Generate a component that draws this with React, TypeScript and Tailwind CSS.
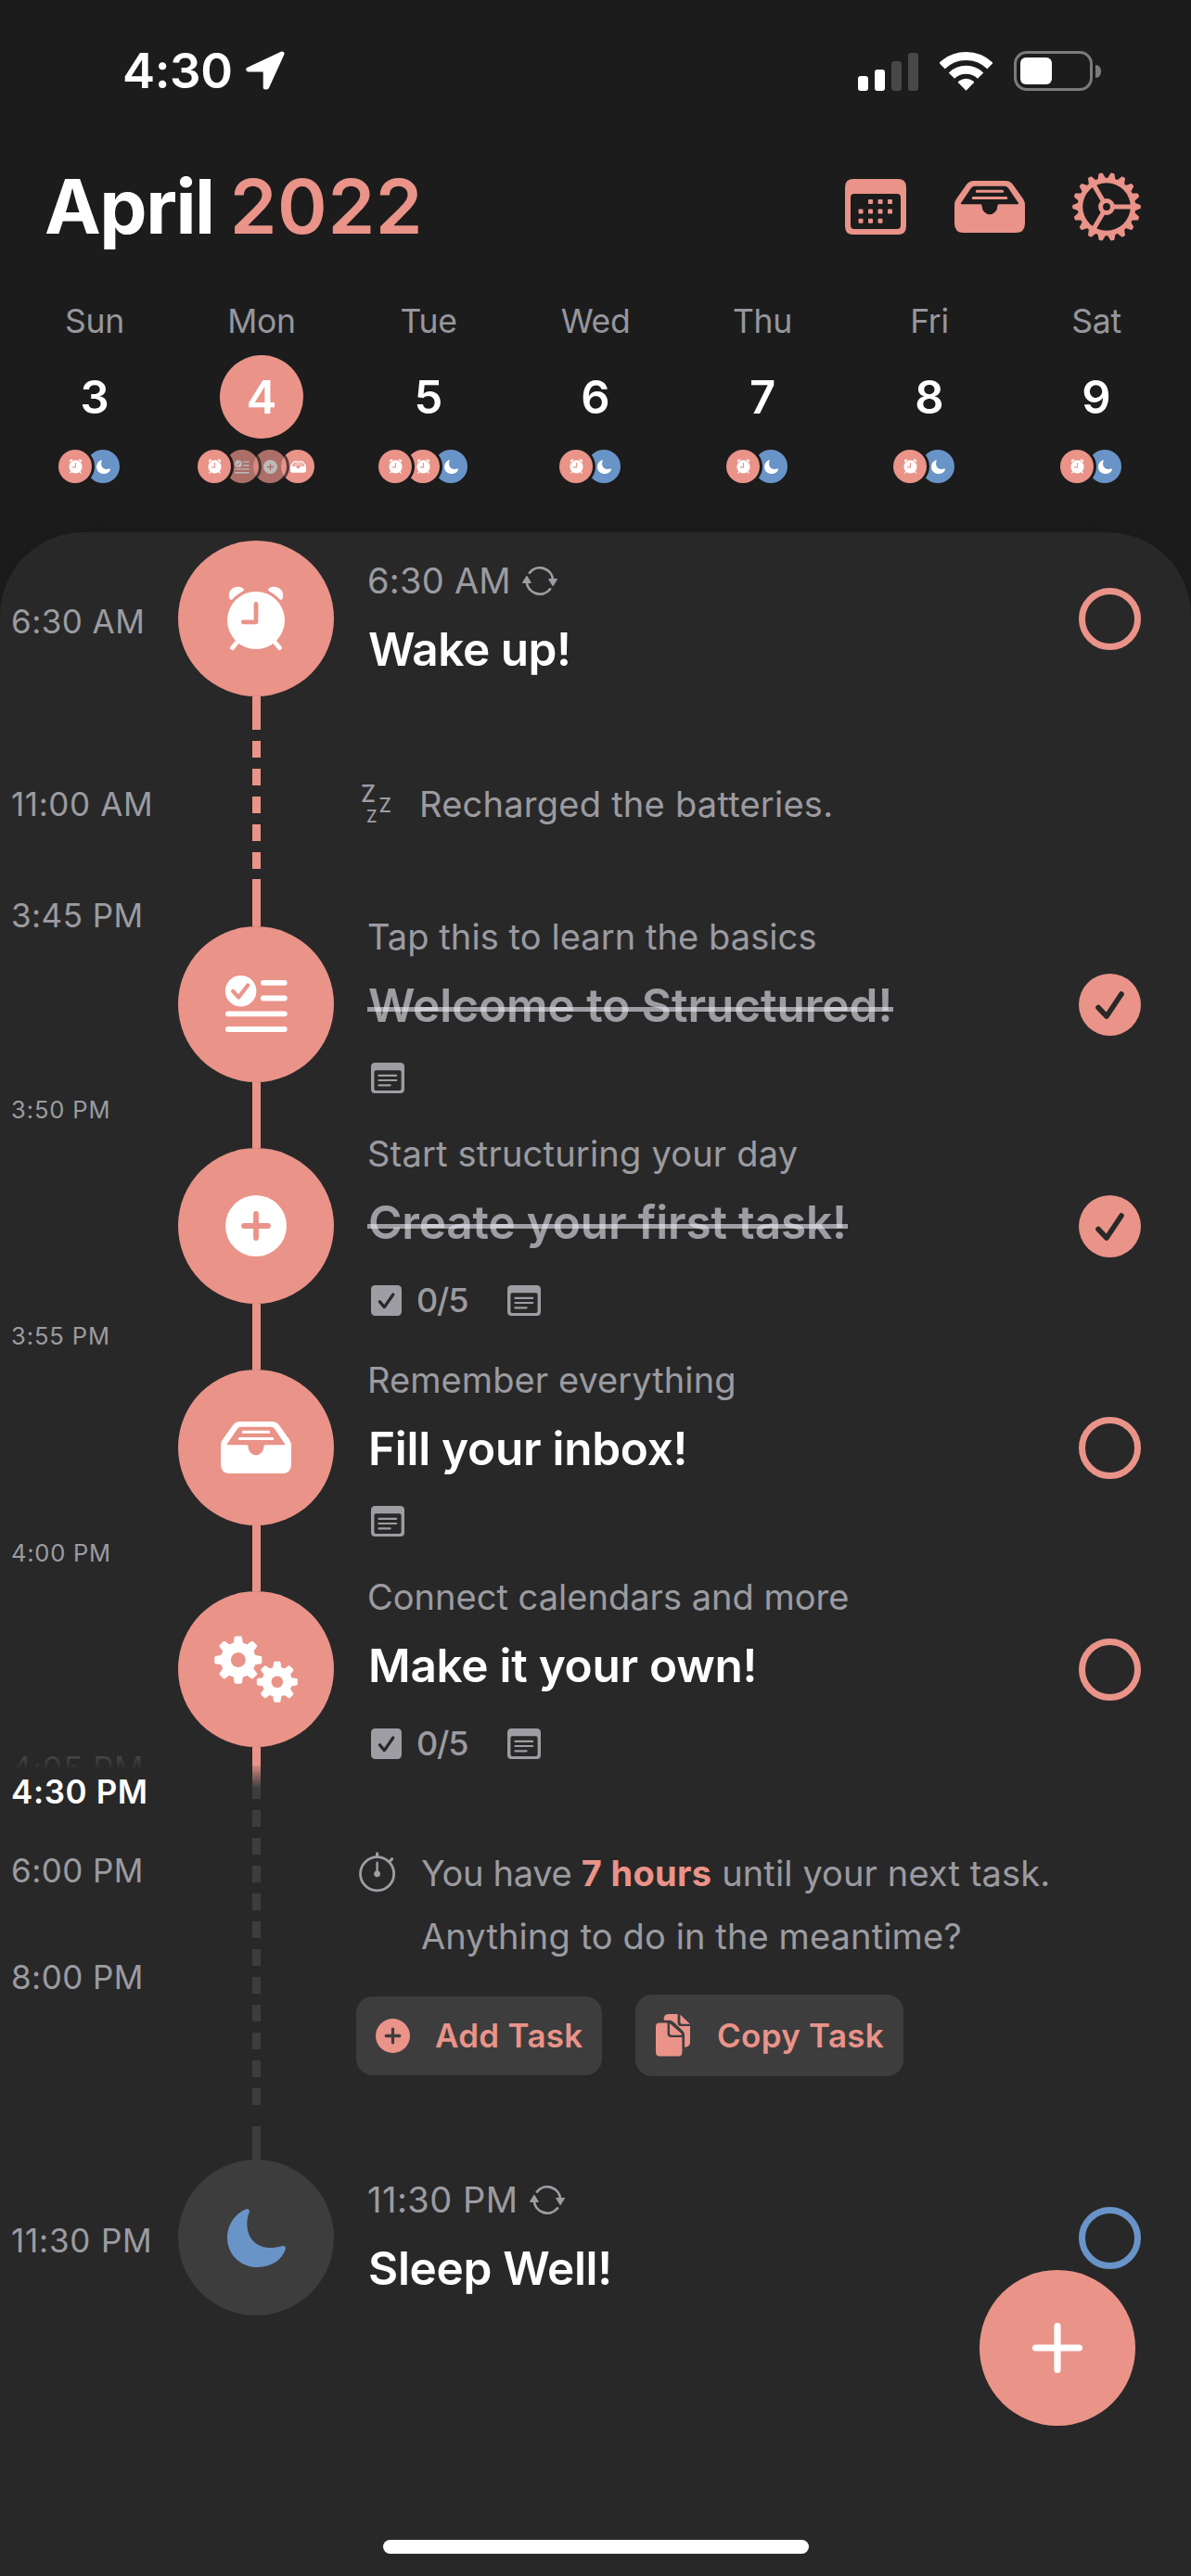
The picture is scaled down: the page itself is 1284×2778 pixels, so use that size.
import type { ReactNode } from "react";

/* ---------- icons ---------- */

type IconProps = { className?: string };

function gearPath(cx: number, cy: number, teeth: number, outer: number, root: number, tip: number, base: number) {
  const step = (Math.PI * 2) / teeth;
  const at = (r: number, a: number) => `${(cx + r * Math.cos(a)).toFixed(2)} ${(cy + r * Math.sin(a)).toFixed(2)}`;
  let d = "";
  for (let i = 0; i < teeth; i++) {
    const a = i * step;
    d += `${i === 0 ? "M" : "L"}${at(root, a - step * base)} L${at(outer, a - step * tip)} L${at(outer, a + step * tip)} L${at(root, a + step * base)} `;
  }
  return d + "Z";
}

const LocationArrow = ({ className }: IconProps) => (
  <svg viewBox="0 0 42 42" className={className}>
    <path d="M39 3 L2.8 20 H21.2 V39 H22.6 Z" fill="white" stroke="white" strokeWidth="5" strokeLinejoin="round" />
  </svg>
);

const Wifi = ({ className }: IconProps) => (
  <svg viewBox="0 0 57 42" className={className}>
    <g fill="none" stroke="white" strokeWidth="9">
      <path d="M2.6 15.1 A37 37 0 0 1 54.4 15.1" />
      <path d="M12.9 25.6 A22.3 22.3 0 0 1 44.1 25.6" />
    </g>
    <path d="M28.5 41.8 L20.2 33.2 Q19.6 32.2 20.6 31.4 Q28.5 26.2 36.4 31.4 Q37.4 32.2 36.8 33.2 Z" fill="white" />
  </svg>
);

const CalendarIcon = ({ className }: IconProps) => (
  <svg viewBox="0 0 66 60" className={className} fill="currentColor">
    <path fillRule="evenodd" d="M9 0 H57 Q66 0 66 9 V51 Q66 60 57 60 H9 Q0 60 0 51 V9 Q0 0 9 0 Z M10 16 Q6 16 6 20 V50 Q6 54 10 54 H56 Q60 54 60 50 V20 Q60 16 56 16 Z" />
    {[[25, 22], [35.5, 22], [46, 22], [14.5, 32.4], [25, 32.4], [35.5, 32.4], [46, 32.4], [14.5, 42.8], [25, 42.8], [35.5, 42.8]].map(([x, y]) => (
      <rect key={`${x}-${y}`} x={x} y={y} width="5" height="5" rx="1" />
    ))}
  </svg>
);

const InboxIcon = ({ className }: IconProps) => (
  <svg viewBox="0 0 76 56" className={className} fill="currentColor">
    <path
      fillRule="evenodd"
      d="M0 26 Q0 22.5 2 19.5 L13 4 Q16 0 21 0 H55 Q60 0 63 4 L74 19.5 Q76 22.5 76 26 V46 Q76 56 66 56 H10 Q0 56 0 46 Z M7 24 Q6.4 25.2 8 25.2 H28 Q29.6 25.2 29.6 27 A8.4 9.2 0 0 0 46.4 27 Q46.4 25.2 48 25.2 H68 Q69.6 25.2 69 24 L58.2 8 Q56.5 5.7 54 5.7 H22 Q19.5 5.7 17.8 8 Z"
    />
    <path d="M24.3 11.2 H51.7 M20.2 18.4 H55.8" stroke="currentColor" strokeWidth="3" strokeLinecap="round" />
  </svg>
);

const SettingsGear = ({ className }: IconProps) => (
  <svg viewBox="0 0 74 74" className={className}>
    <path d={gearPath(37, 37, 18, 36, 30.5, 0.11, 0.34)} fill="currentColor" stroke="currentColor" strokeWidth="1.6" strokeLinejoin="round" />
    <circle cx="37" cy="37" r="25.8" fill="#1c1c1c" />
    <path d="M44 37 H64 M33.5 31 L23.3 13.4 M33.5 43 L23.3 60.6" stroke="currentColor" strokeWidth="5" />
    <circle cx="37" cy="37" r="6.4" fill="#1c1c1c" stroke="currentColor" strokeWidth="5" />
  </svg>
);

const AlarmIcon = ({ className }: IconProps) => (
  <svg viewBox="0 0 64 70" className={className}>
    <g fill="white">
      <circle cx="32" cy="37" r="31" />
      <path d="M3.3 13 C1 6 6.5 .7 12.5 .7 C15.5 .7 17.6 1.7 18.8 3.2 Q19.6 4.6 18 5.6 C13.4 8 9.8 10.8 6.6 14.2 Q4.4 16 3.3 13 Z" />
      <path d="M60.7 13 C63 6 57.5 .7 51.5 .7 C48.5 .7 46.4 1.7 45.2 3.2 Q44.4 4.6 46 5.6 C50.6 8 54.2 10.8 57.4 14.2 Q59.6 16 60.7 13 Z" />
    </g>
    <path d="M12.5 59.5 L6.6 66.6 M51.5 59.5 L57.4 66.6" stroke="white" strokeWidth="4.8" strokeLinecap="round" />
    <path d="M32 19.3 V38.8 H18.3" fill="none" stroke="#ea9389" strokeWidth="4.8" strokeLinecap="round" strokeLinejoin="round" />
  </svg>
);

const ChecklistIcon = ({ className }: IconProps) => (
  <svg viewBox="0 0 69 64" className={className}>
    <circle cx="17.6" cy="17.7" r="16.8" fill="white" />
    <path d="M9.2 18 L15.2 24.6 L25.2 11.4" fill="none" stroke="#ea9389" strokeWidth="4.2" strokeLinecap="round" strokeLinejoin="round" />
    <path d="M41.8 8.8 H64.8 M41.8 25.5 H64.8 M3.8 42.3 H64.8 M3.8 59 H64.8" stroke="white" strokeWidth="5.8" strokeLinecap="round" />
  </svg>
);

const PlusCircle = ({ className, plus = "#ea9389", fill = "white" }: IconProps & { plus?: string; fill?: string }) => (
  <svg viewBox="0 0 66 66" className={className}>
    <circle cx="33" cy="33" r="33" fill={fill} />
    <path d="M33 20 V46 M20 33 H46" stroke={plus} strokeWidth="5.8" strokeLinecap="round" />
  </svg>
);

const GearsIcon = ({ className }: IconProps) => (
  <svg viewBox="0 0 90 88" className={className}>
    <g fill="white" stroke="white" strokeWidth="3" strokeLinejoin="round">
      <path d={gearPath(25.8, 26.1, 8, 24.2, 17.8, 0.14, 0.27)} />
      <path d={gearPath(67.8, 49.8, 8, 20.6, 15, 0.14, 0.27)} />
    </g>
    <circle cx="25.8" cy="26.1" r="8" fill="#ea9389" />
    <circle cx="67.8" cy="49.8" r="6.3" fill="#ea9389" />
  </svg>
);

const MoonIcon = ({ className }: IconProps) => (
  <svg viewBox="0 0 63 63" className={className} fill="currentColor">
    <path d="M20 .6 C22.8 -.6 24.6 1 23.8 3.8 C21.4 9.5 21 15 21.6 20 C23 33.5 32.5 42 46.5 42 C51 42 54.4 41.4 58.6 40.2 C61.6 39.2 63.4 40.6 62.8 43.6 C59 55.4 47.4 63 33 63 C14.5 63 0 49.5 0 31 C0 17.4 8.2 5.6 20 .6 Z" />
  </svg>
);

const RepeatIcon = ({ className }: IconProps) => (
  <svg viewBox="0 0 38 31" className={className}>
    <g fill="none" stroke="#9d9da3" strokeWidth="2.8" strokeLinecap="round">
      <path d="M8 6.6 A14.2 14.2 0 0 1 33.2 15" />
      <path d="M30 24.4 A14.2 14.2 0 0 1 4.8 16" />
    </g>
    <path d="M.8 17.4 L4.9 10.6 L9 17.4 Z M29 13.6 L33.1 20.4 L37.2 13.6 Z" fill="#9d9da3" stroke="#9d9da3" strokeWidth="1.4" strokeLinejoin="round" />
  </svg>
);

const NoteIcon = ({ className }: IconProps) => (
  <svg viewBox="0 0 36 33" className={className}>
    <path fillRule="evenodd" fill="#9d9da3" d="M4.5 0 H31.5 Q36 0 36 4.5 V28.5 Q36 33 31.5 33 H4.5 Q0 33 0 28.5 V4.5 Q0 0 4.5 0 Z M5.4 8.3 Q3.4 8.3 3.4 10.3 V28 Q3.4 30 5.4 30 H30.6 Q32.6 30 32.6 28 V10.3 Q32.6 8.3 30.6 8.3 Z" />
    <path d="M8.4 13.8 H27.2 M8.4 19 H27.2 M8.4 24.3 H20.6" stroke="#9d9da3" strokeWidth="2.2" strokeLinecap="round" />
  </svg>
);

const CheckBoxIcon = ({ className }: IconProps) => (
  <svg viewBox="0 0 33 33" className={className}>
    <rect width="33" height="33" rx="4.5" fill="#9d9da3" />
    <path d="M9.3 17.6 L14.4 23.6 L23.8 10" fill="none" stroke="#282828" strokeWidth="3.2" strokeLinecap="round" strokeLinejoin="round" />
  </svg>
);

const SleepIcon = ({ className }: IconProps) => (
  <svg viewBox="-4 -9 42 60" className={className} fill="#9d9da3" fontFamily="Inter, sans-serif" fontWeight="500">
    <text x="-1" y="19.4" fontSize="25">Z</text>
    <text x="18.4" y="30" fontSize="21">Z</text>
    <text x="5" y="41" fontSize="18">Z</text>
  </svg>
);

const StopwatchIcon = ({ className }: IconProps) => (
  <svg viewBox="0 0 40 44" className={className}>
    <g fill="none" stroke="#9d9da3" strokeLinecap="round">
      <circle cx="19.6" cy="23.7" r="18.1" strokeWidth="2.8" />
      <path d="M19.6 1.8 V5" strokeWidth="3.2" />
      <path d="M33.2 10.2 L35.6 7.8" strokeWidth="3.2" />
      <path d="M19.6 11.8 V22" strokeWidth="2.4" />
    </g>
    <circle cx="19.6" cy="23.8" r="3.4" fill="#9d9da3" />
  </svg>
);

const CopyIcon = ({ className }: IconProps) => (
  <svg viewBox="0 0 37 46" className={className} fill="#ea9389">
    <path d="M8.6 5.5 Q8.6 0 14 0 H23.6 V9.5 Q23.6 13 27 13 H37 V30.5 Q37 34.6 33 35.4 L20 36 Z" />
    <path d="M26.4 .8 L37 10.8 H28.4 Q26.4 10.8 26.4 8.8 Z" />
    <path d="M-2 6.8 H15 Q17 6.8 19 8.6 L28.6 17.4 Q31 19.6 31 22.5 V46 H-2 Z" fill="#3d3d3d" />
    <path d="M0 13.6 Q0 9.4 4 9.4 H12.6 V21 Q12.6 25 16.6 25 H28.4 V41 Q28.4 45.6 24 45.6 H4.4 Q0 45.6 0 41 Z" />
    <path d="M15 10 L27.8 21.2 Q28.6 22.6 27 22.8 H17 Q15 22.8 15 20.6 Z" />
  </svg>
);

/* ---------- header ---------- */

function StatusBar() {
  return (
    <div className="flex h-[153px] items-center justify-between pl-[132px] pr-[97px]">
      <div className="flex items-center">
        <span className="w-[133px] text-[52.7px] font-semibold leading-none tracking-[-0.4px]">4:30</span>
        <LocationArrow className="size-[42px]" />
      </div>
      <div className="flex h-[43px] items-center">
        <div className="flex h-[41px] items-end gap-[7px] self-end">
          <div className="h-4 w-[11px] rounded-[3px] bg-white" />
          <div className="h-[23px] w-[11px] rounded-[3px] bg-white" />
          <div className="h-8 w-[11px] rounded-[3px] bg-[#48484a]" />
          <div className="h-[41px] w-[11px] rounded-[3px] bg-[#48484a]" />
        </div>
        <Wifi className="ml-[23px] h-[42px] w-[57px]" />
        <div className="ml-[23px] flex h-[43px] w-[85px] items-center rounded-[14px] border-[3px] border-[#7b7b7c] pl-[4px]">
          <div className="h-[29px] w-[34px] rounded-[6px] bg-white" />
        </div>
        <div className="ml-[3px] h-[14px] w-[6px] rounded-r-full bg-[#7b7b7c]" />
      </div>
    </div>
  );
}

function TitleBar() {
  return (
    <div className="flex h-[139px] items-center justify-between pl-12 pr-[54px]">
      <h1 className="flex text-[81.5px] leading-none">
        <span className="font-bold tracking-[-1.5px]">April</span>
        <span className="ml-[17px] font-[560] tracking-[0.6px] text-[#ea9389]">2022</span>
      </h1>
      <div className="flex items-center text-[#ea9389]">
        <CalendarIcon className="mr-[52px] h-[60px] w-[66px]" />
        <InboxIcon className="mr-[51px] h-[56px] w-[76px]" />
        <SettingsGear className="size-[74px]" />
      </div>
    </div>
  );
}

type MiniKind = "alarm" | "moon" | "list" | "plus" | "inbox";
type Mini = { kind: MiniKind; dim?: boolean };

const miniIcons: Record<MiniKind, ReactNode> = {
  alarm: <AlarmIcon className="h-4 w-[15px]" />,
  moon: <MoonIcon className="size-[15px]" />,
  list: <ChecklistIcon className="h-[15px] w-4" />,
  plus: <PlusCircle className="size-[15px]" />,
  inbox: <InboxIcon className="h-[13px] w-[17px]" />,
};

const miniLayers = ["z-40", "z-30", "z-20", "z-10"];

const usual: Mini[] = [{ kind: "alarm" }, { kind: "moon" }];

const days: { name: string; date: number; minis: Mini[]; selected?: boolean }[] = [
  { name: "Sun", date: 3, minis: usual },
  {
    name: "Mon",
    date: 4,
    selected: true,
    minis: [{ kind: "alarm" }, { kind: "list", dim: true }, { kind: "plus", dim: true }, { kind: "inbox" }],
  },
  { name: "Tue", date: 5, minis: [{ kind: "alarm" }, { kind: "alarm" }, { kind: "moon" }] },
  { name: "Wed", date: 6, minis: usual },
  { name: "Thu", date: 7, minis: usual },
  { name: "Fri", date: 8, minis: usual },
  { name: "Sat", date: 9, minis: usual },
];

function WeekStrip() {
  return (
    <div className="grid h-[282px] grid-cols-7 px-3 pt-[34px]">
      {days.map((day) => (
        <div key={day.name} className="flex flex-col items-center">
          <div className="h-[41px] text-[35.5px] leading-[41px] tracking-[-0.3px] text-[#ebebf5]/60">{day.name}</div>
          <div
            className={`mt-4 flex size-[90px] items-center justify-center rounded-full text-[49px] font-semibold leading-none ${
              day.selected ? "bg-[#ea9389]" : ""
            }`}
          >
            {day.date}
          </div>
          <div className="isolate mr-3 mt-3 flex -space-x-1.5">
            {day.minis.map((m, i) => (
              <div
                key={i}
                className={`relative flex size-9 items-center justify-center rounded-full text-white ring-[3px] ring-[#1c1c1c] ${miniLayers[i]} ${
                  m.kind === "moon" ? "bg-[#6994c8]" : "bg-[#ea9389]"
                } ${m.dim ? "opacity-70" : ""}`}
              >
                {miniIcons[m.kind]}
              </div>
            ))}
          </div>
        </div>
      ))}
    </div>
  );
}

/* ---------- timeline ---------- */

const timeLabels: { text: string; className: string }[] = [
  { text: "6:30 AM", className: "mt-[76px] h-10 text-[35px] leading-10 tracking-[0.45px] text-[#ebebf5]/60" },
  { text: "11:00 AM", className: "mt-[157px] h-10 text-[35px] leading-10 tracking-[0.6px] text-[#ebebf5]/60" },
  { text: "3:45 PM", className: "mt-[80px] h-10 text-[35px] leading-10 tracking-[0.45px] text-[#ebebf5]/60" },
  { text: "3:50 PM", className: "mt-[175px] h-[30px] text-[25.5px] leading-[30px] tracking-[0.9px] text-[#ebebf5]/60" },
  { text: "3:55 PM", className: "mt-[214px] h-[30px] text-[25.5px] leading-[30px] tracking-[0.9px] text-[#ebebf5]/60" },
  { text: "4:00 PM", className: "mt-[204px] h-[30px] text-[25.5px] leading-[30px] tracking-[0.75px] text-[#ebebf5]/60" },
  {
    text: "4:05 PM",
    className:
      "mt-[197px] h-[25px] overflow-hidden text-[35px] leading-10 tracking-[0.45px] text-[#ebebf5]/15 [mask-image:linear-gradient(to_bottom,black_30%,transparent_88%)]",
  },
  { text: "4:30 PM", className: "h-10 text-[35px] font-semibold leading-10 tracking-[0.6px] text-white" },
  { text: "6:00 PM", className: "mt-[45px] h-10 text-[35px] leading-10 tracking-[0.45px] text-[#ebebf5]/60" },
  { text: "8:00 PM", className: "mt-[75px] h-10 text-[35px] leading-10 tracking-[0.45px] text-[#ebebf5]/60" },
  { text: "11:30 PM", className: "mt-[244px] h-10 text-[35px] leading-10 tracking-[0.8px] text-[#ebebf5]/60" },
];

function Node({ children, muted }: { children: ReactNode; muted?: boolean }) {
  return (
    <div className={`flex size-[168px] items-center justify-center rounded-full ${muted ? "bg-[#3d3d3d]" : "bg-[#ea9389]"}`}>
      {children}
    </div>
  );
}

function Rail() {
  return (
    <div className="flex w-[168px] flex-col items-center pt-[9px] text-white">
      <Node>
        <AlarmIcon className="h-[70px] w-16" />
      </Node>
      <div className="h-9 w-[9px] bg-[#ea9389]" />
      <div className="h-[161px] w-[9px] bg-[repeating-linear-gradient(to_bottom,transparent_0_12px,#ea9389_12px_30px)]" />
      <div className="h-[51px] w-[9px] bg-[#ea9389]" />
      <Node>
        <ChecklistIcon className="h-16 w-[69px]" />
      </Node>
      <div className="h-[71px] w-[9px] bg-[#ea9389]" />
      <Node>
        <PlusCircle className="size-[66px]" />
      </Node>
      <div className="h-[71px] w-[9px] bg-[#ea9389]" />
      <Node>
        <InboxIcon className="h-[56px] w-[76px]" />
      </Node>
      <div className="h-[71px] w-[9px] bg-[#ea9389]" />
      <Node>
        <GearsIcon className="mt-[16px] h-[88px] w-[90px]" />
      </Node>
      <div className="h-5 w-[9px] bg-[#ea9389]" />
      <div className="h-6 w-[9px] bg-linear-to-b from-[#d48980] to-[#3d3d3d]" />
      <div className="h-3 w-[9px] bg-[#3d3d3d]" />
      <div className="h-[330px] w-[9px] bg-[repeating-linear-gradient(to_bottom,transparent_0_12px,#3d3d3d_12px_30px)]" />
      <div className="mt-[23px] h-9 w-[9px] bg-[#3d3d3d]" />
      <Node muted>
        <MoonIcon className="size-[63px] text-[#6994c8]" />
      </Node>
    </div>
  );
}

type TaskProps = {
  sub: string;
  title: string;
  className: string;
  checkClass: string;
  titleClass?: string;
  subClass?: string;
  repeat?: boolean;
  done?: boolean;
  blue?: boolean;
  metaClass?: string;
  counter?: string;
};

function Task({ sub, title, className, checkClass, titleClass = "tracking-[-0.27px]", subClass = "tracking-[0.08px]", repeat, done, blue, metaClass, counter }: TaskProps) {
  return (
    <div className={`flex items-start justify-between ${className}`}>
      <div>
        <div className={`flex h-[60px] items-center text-[38px] leading-[60px] text-[#ebebf5]/60 ${subClass}`}>
          {sub}
          {repeat && <RepeatIcon className="ml-[12px] h-[31px] w-[38px]" />}
        </div>
        <div className="flex h-[88px]">
          <span className={`relative pl-px text-[49.5px] font-semibold leading-[88px] ${done ? "text-[#ebebf5]/60" : "text-white"} ${titleClass}`}>
            {title}
            {done && <span className="absolute -right-px left-0 top-[46px] h-[5px] bg-[#ebebf5]/60" />}
          </span>
        </div>
        {metaClass && (
          <div className={`ml-1 flex h-10 items-center ${metaClass}`}>
            {counter && (
              <>
                <CheckBoxIcon className="size-[33px]" />
                <span className="ml-[16px] w-[98px] text-[36px] font-medium leading-10 tracking-[-1.2px] text-[#ebebf5]/60">{counter}</span>
              </>
            )}
            <NoteIcon className="h-[33px] w-9" />
          </div>
        )}
      </div>
      {done ? (
        <div className={`flex size-[67px] items-center justify-center rounded-full bg-[#ea9389] ${checkClass}`}>
          <svg viewBox="0 0 67 67" className="size-[67px]">
            <path d="M21 36.5 L30 46 L46 22" fill="none" stroke="#282828" strokeWidth="5.6" strokeLinecap="round" strokeLinejoin="round" />
          </svg>
        </div>
      ) : (
        <div className={`size-[67px] rounded-full border-[7px] ${blue ? "border-[#6994c8]" : "border-[#ea9389]"} ${checkClass}`} />
      )}
    </div>
  );
}

function Content() {
  return (
    <div className="flex-1 pl-9 pr-[54px] pt-[22px]">
      <Task className="h-[148px]" sub="6:30 AM" title="Wake up!" titleClass="tracking-[-0.45px]" subClass="tracking-[0.25px]" checkClass="mt-[38px]" repeat />

      <div className="ml-[-10px] mt-[93px] flex h-[60px] items-center">
        <SleepIcon className="h-[60px] w-[42px]" />
        <span className="ml-[24px] text-[38px] leading-[60px] tracking-[0.25px] text-[#ebebf5]/60">Recharged the batteries.</span>
      </div>

      <Task className="mt-[83px] h-[202px]" sub="Tap this to learn the basics" title="Welcome to Structured!" titleClass="tracking-[-0.03px]" checkClass="mt-[70px]" metaClass="mt-[14px]" done />
      <Task className="mt-8 h-[208px]" sub="Start structuring your day" title="Create your first task!" titleClass="tracking-[-0.16px]" subClass="tracking-[0.2px]" checkClass="mt-[75px]" metaClass="mt-5" counter="0/5" done />
      <Task className="mt-9 h-[202px]" sub="Remember everything" title="Fill your inbox!" checkClass="mt-[70px]" metaClass="mt-[14px]" />
      <Task className="mt-8 h-[208px]" sub="Connect calendars and more" title="Make it your own!" subClass="tracking-[0.02px]" checkClass="mt-[75px]" metaClass="mt-5" counter="0/5" />

      <div className="ml-[-9px] mt-[86px] flex h-[136px] items-start">
        <StopwatchIcon className="mt-[11px] h-11 w-10" />
        <p className="ml-[27px] whitespace-nowrap text-[38px] leading-[68px] tracking-[0.12px] text-[#ebebf5]/60">
          <span className="tracking-[-0.3px]">You have </span>
          <span className="font-bold tracking-[0.3px] text-[#ea9389]">7 hours</span> until your next task.
          <br />
          Anything to do in the meantime?
        </p>
      </div>

      <div className="ml-[-12px] mt-[29px] flex h-[88px] items-center gap-9 text-[35px] font-semibold tracking-[0.28px] text-[#ea9389]">
        <button className="flex h-[85px] w-[265px] items-center rounded-[18px] bg-[#3d3d3d] pl-[21px]">
          <PlusCircle className="size-[37px]" fill="#ea9389" plus="#3d3d3d" />
          <span className="ml-[27px]">Add Task</span>
        </button>
        <button className="flex h-[88px] w-[289px] items-center rounded-[18px] bg-[#3d3d3d] pl-[22px]">
          <CopyIcon className="h-[46px] w-[37px]" />
          <span className="ml-[29px]">Copy Task</span>
        </button>
      </div>

      <Task className="mt-[103px] h-[148px]" sub="11:30 PM" title="Sleep Well!" titleClass="tracking-[-0.3px]" subClass="tracking-[0.5px]" checkClass="mt-[38px]" repeat blue />
    </div>
  );
}

export default function App() {
  return (
    <div className="relative h-[2778px] w-[1284px] overflow-hidden bg-[#1c1c1c] font-[Inter,sans-serif] text-white">
      <div className="font-[430]">
        <StatusBar />
        <TitleBar />
        <WeekStrip />

        <main className="flex h-[2204px] rounded-t-[90px] bg-[#282828] shadow-[0_0_30px_rgba(24,24,30,0.5)]">
          <div className="flex w-[192px] flex-col whitespace-nowrap pl-3">
            {timeLabels.map((label) => (
              <div key={label.text} className={label.className}>
                {label.text}
              </div>
            ))}
          </div>
          <Rail />
          <Content />
        </main>
      </div>

      <button className="absolute bottom-[162px] right-[60px] flex size-[168px] items-center justify-center rounded-full bg-[#ea9389]">
        <svg viewBox="0 0 54 54" className="size-[54px]">
          <path d="M27 3.6 V50.4 M3.6 27 H50.4" stroke="white" strokeWidth="7.2" strokeLinecap="round" />
        </svg>
      </button>
      <div className="absolute bottom-6 left-[413px] h-[15px] w-[459px] rounded-full bg-white" />
    </div>
  );
}
